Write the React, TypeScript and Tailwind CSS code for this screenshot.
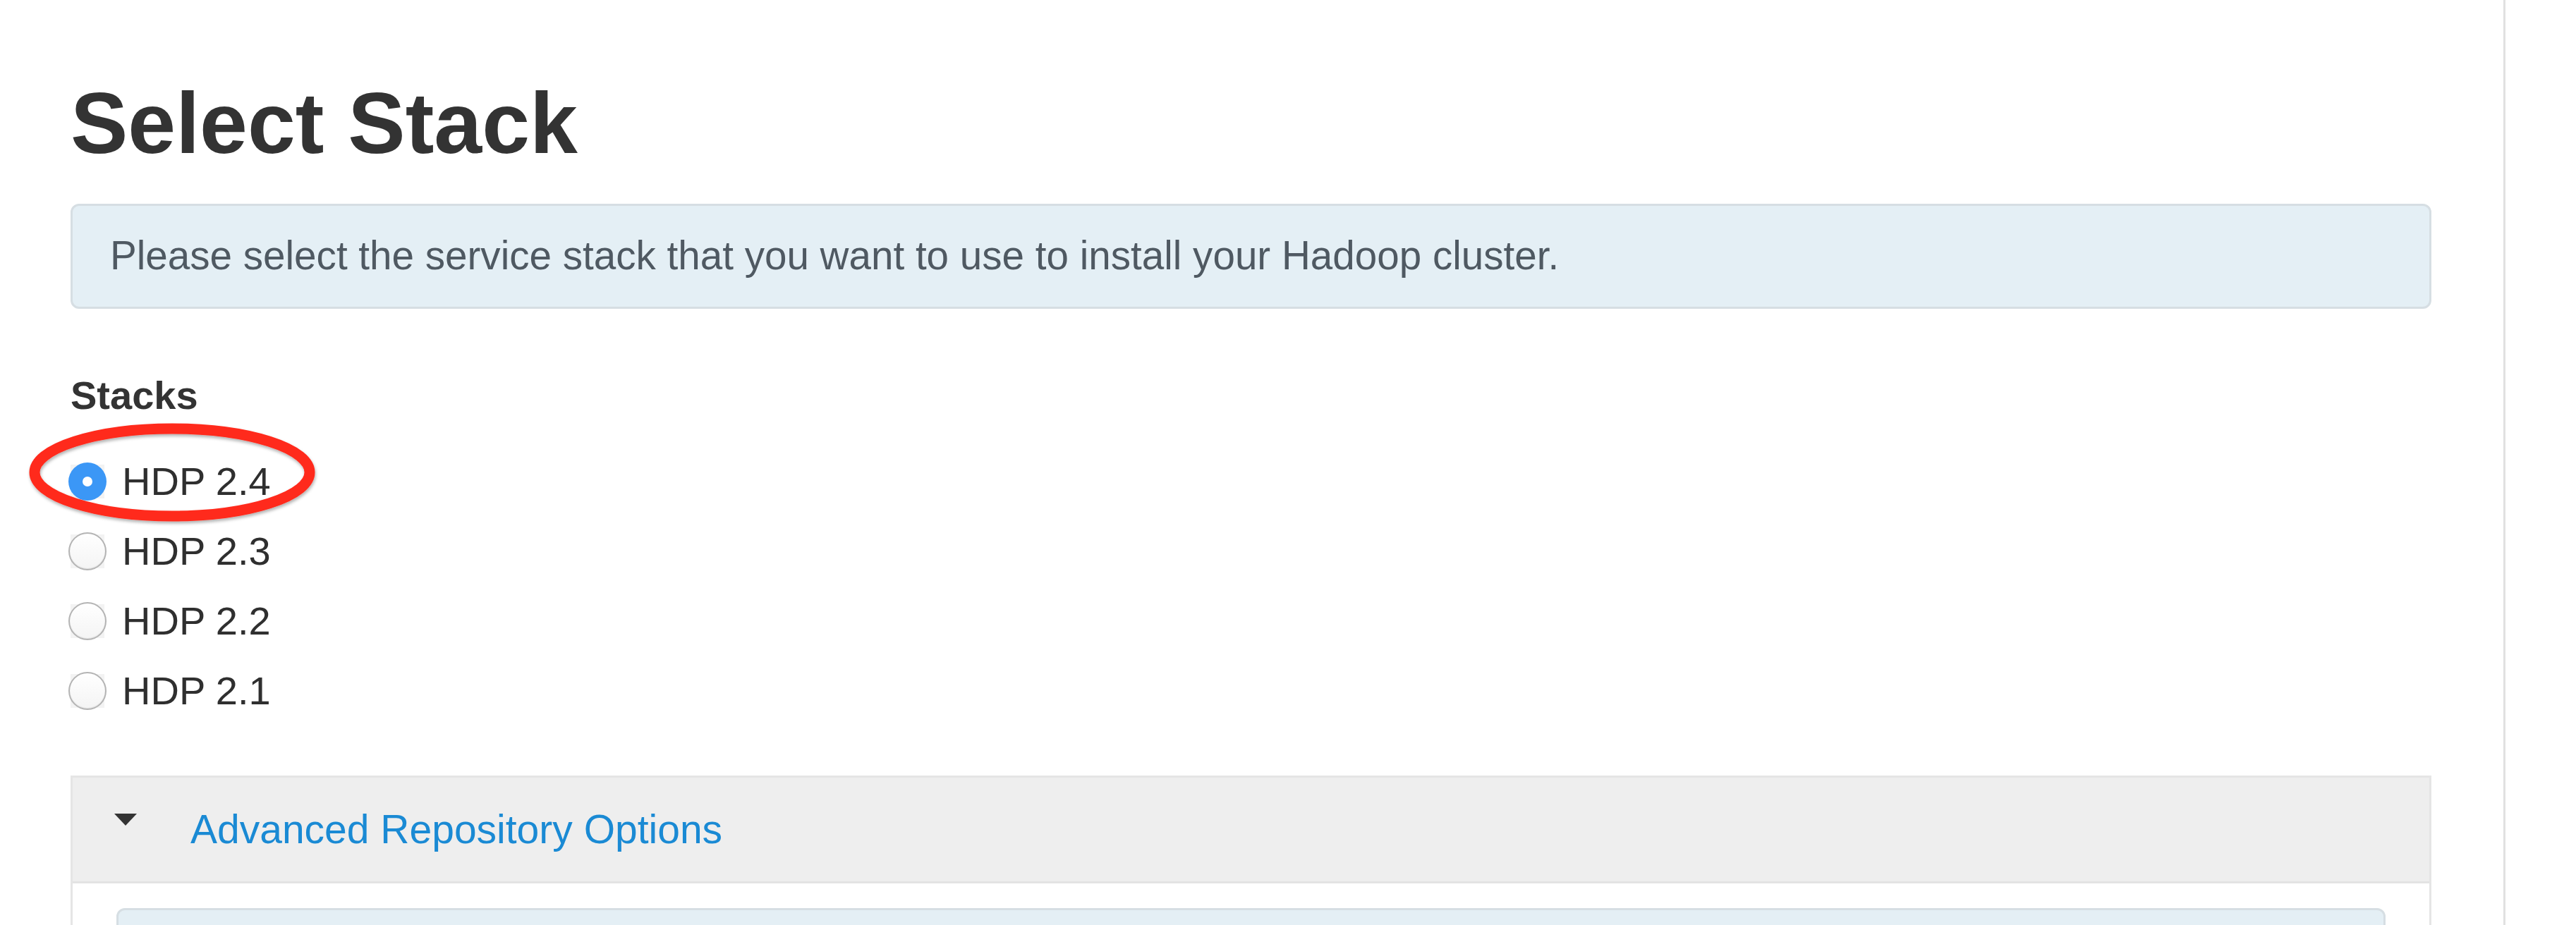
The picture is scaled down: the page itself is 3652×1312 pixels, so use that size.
const stacks = [
  { name: 'HDP 2.4', checked: true },
  { name: 'HDP 2.3', checked: false },
  { name: 'HDP 2.2', checked: false },
  { name: 'HDP 2.1', checked: false },
];

function Radio({ checked }: { checked: boolean }) {
  return (
    <div className="relative -ml-[3px] flex h-[54px] w-[54px] shrink-0 items-center justify-center">
      <div className="absolute h-[48px] w-[48px] bg-[#f3f3f3]" />
      {checked ? (
        <div className="relative flex h-[54px] w-[54px] items-center justify-center rounded-full bg-[#3b97f6]">
          <div className="h-[14px] w-[14px] rounded-full bg-white" />
        </div>
      ) : (
        <div className="relative h-[54px] w-[54px] rounded-full border-[2px] border-[#b4b4b4] bg-linear-to-b from-white to-[#f4f4f4] shadow-[inset_0_-1px_1px_rgba(0,0,0,0.08)]" />
      )}
    </div>
  );
}

export default function App() {
  return (
    <div className="flex h-[1312px] w-full overflow-hidden bg-white font-['Liberation_Sans',Arial,sans-serif]">
      <div className="w-[3549px] shrink-0 pl-[100px] pr-[102px]">
        <h1 className="mt-[114px] text-[122px] font-bold leading-none text-[#333333]">Select Stack</h1>

        <div className="mt-[53px] flex h-[149px] items-center rounded-[12px] border-[3px] border-[#d6dee3] bg-[#e4eff5] pl-[53px] text-[56.6px] text-[#4f5962]">
          Please select the service stack that you want to use to install your Hadoop cluster.
        </div>

        <div className="mt-[95px] text-[56px] font-bold leading-none text-[#333333]">Stacks</div>

        <div className="relative mt-[44px]">
          {stacks.map((s) => (
            <label key={s.name} className="flex h-[99px] items-center">
              <Radio checked={s.checked} />
              <span className="ml-[22px] text-[56px] leading-none text-[#2f2f2f]">{s.name}</span>
            </label>
          ))}

          {/* hand-drawn highlight round the chosen stack */}
          <svg
            className="pointer-events-none absolute left-[-64px] top-[-35px]"
            width="424"
            height="156"
            viewBox="0 0 424 156"
          >
            <defs>
              <filter id="shade" x="-10%" y="-10%" width="120%" height="130%">
                <feDropShadow dx="1" dy="3" stdDeviation="2" floodColor="#000" floodOpacity="0.3" />
              </filter>
            </defs>
            <ellipse cx="208" cy="72" rx="195" ry="62" fill="none" stroke="#ff2a1c" strokeWidth="15" filter="url(#shade)" />
          </svg>
        </div>

        <div className="mt-[71px] border-[3px] border-[#e5e5e5]">
          <div className="flex h-[150px] items-center border-b-[3px] border-[#e3e3e3] bg-[#eeeeee] pl-[59px]">
            <div className="mb-[28px] h-0 w-0 border-l-[16px] border-r-[16px] border-t-[17px] border-l-transparent border-r-transparent border-t-[#333333]" />
            <span className="ml-[76px] text-[57px] leading-none text-[#1a8ad4]">Advanced Repository Options</span>
          </div>
          <div className="px-[62px] pt-[35px]">
            <div className="h-[200px] rounded-[12px] border-[3px] border-[#d6dee3] bg-[#e4eff5]" />
          </div>
        </div>
      </div>
      <div className="w-[3px] shrink-0 bg-[#e1e1e1]" />
      <div className="flex-1" />
    </div>
  );
}
